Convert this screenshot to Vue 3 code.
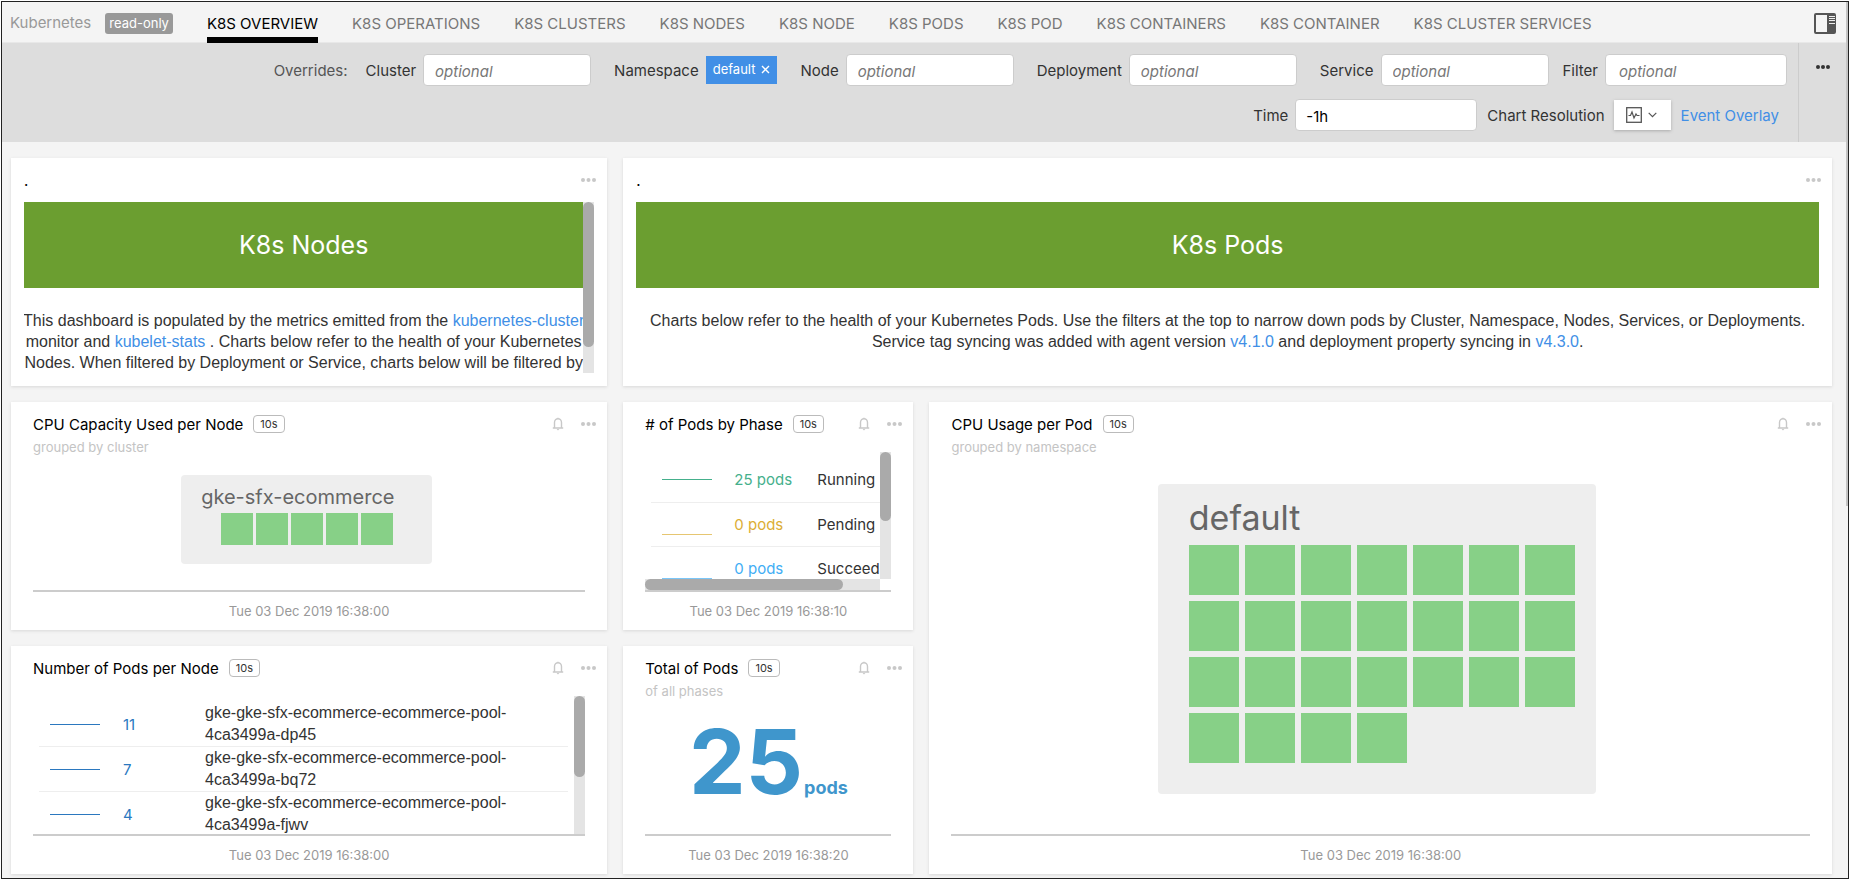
<script setup>
import { ref } from 'vue'

const tabs = [
  'K8S OVERVIEW',
  'K8S OPERATIONS',
  'K8S CLUSTERS',
  'K8S NODES',
  'K8S NODE',
  'K8S PODS',
  'K8S POD',
  'K8S CONTAINERS',
  'K8S CONTAINER',
  'K8S CLUSTER SERVICES',
]
const activeTab = ref('K8S OVERVIEW')
const time = ref('-1h')

const phases = [
  { value: '25 pods', label: 'Running', tone: 'green' },
  { value: '0 pods', label: 'Pending', tone: 'amber' },
  { value: '0 pods', label: 'Succeeded', tone: 'sky' },
]
const nodes = [
  { pods: 11, name: 'gke-gke-sfx-ecommerce-ecommerce-pool-4ca3499a-dp45' },
  { pods: 7, name: 'gke-gke-sfx-ecommerce-ecommerce-pool-4ca3499a-bq72' },
  { pods: 4, name: 'gke-gke-sfx-ecommerce-ecommerce-pool-4ca3499a-fjwv' },
]
</script>

<template>
  <div class="page">
    <header class="topbar">
      <span class="crumb">Kubernetes</span>
      <span class="readonly">read-only</span>
      <nav class="tabs">
        <a
          v-for="tab in tabs"
          :key="tab"
          href="#"
          :class="['tab', { active: tab === activeTab }]"
          @click.prevent="activeTab = tab"
        >{{ tab }}</a>
      </nav>
      <button class="icon-btn panel-btn" aria-label="Toggle side panel">
        <svg width="22" height="21" viewBox="0 0 22 21">
          <rect x="1" y="1" width="20" height="19" rx="1" fill="none" stroke="#555" stroke-width="2" />
          <rect x="13" y="1" width="8" height="19" fill="#555" />
          <path d="M15 3.5h6M15 5.5h6M15 7.5h6M15 10.5h6" stroke="#eee" stroke-width="1" />
        </svg>
      </button>
    </header>

    <section class="filters">
      <div class="filter-rows">
        <div class="filter-row">
          <span class="overrides">Overrides:</span>
          <div class="field"><label for="f-cluster">Cluster</label><input id="f-cluster" placeholder="optional"></div>
          <div class="field">
            <span>Namespace</span>
            <button class="chip">default
              <svg width="9" height="9" viewBox="0 0 9 9"><path d="M1 1l7 7M8 1l-7 7" stroke="#fff" stroke-width="1.4" /></svg>
            </button>
          </div>
          <div class="field"><label for="f-node">Node</label><input id="f-node" placeholder="optional"></div>
          <div class="field"><label for="f-deployment">Deployment</label><input id="f-deployment" placeholder="optional"></div>
          <div class="field"><label for="f-service">Service</label><input id="f-service" placeholder="optional"></div>
          <div class="field last"><label for="f-filter">Filter</label><input id="f-filter" class="wide" placeholder="optional"></div>
        </div>
        <div class="filter-row second">
          <div class="field"><label for="f-time">Time</label><input id="f-time" v-model="time" class="wide time"></div>
          <div class="field resolution">
            <label for="f-resolution">Chart Resolution</label>
            <button id="f-resolution" class="resolution-btn">
              <svg width="16" height="16" viewBox="0 0 16 16" fill="none" stroke="#555">
                <rect x="0.7" y="0.7" width="14.6" height="14.6" stroke-width="1.3" />
                <path d="M2.5 8.5h2l1.5-3.5 2 6 2-4 1 1.5h2.5" stroke-width="1.2" />
              </svg>
              <svg width="9" height="6" viewBox="0 0 9 6" fill="none" stroke="#555"><path d="M0.7 0.8l3.8 3.8 3.8-3.8" stroke-width="1.2" /></svg>
            </button>
          </div>
          <a href="#" class="overlay-link">Event Overlay</a>
        </div>
      </div>
      <div class="more-col">
        <button class="icon-btn dark" aria-label="More actions">
          <svg width="14" height="4" viewBox="0 0 14 4"><circle cx="2" cy="2" r="2" /><circle cx="7" cy="2" r="2" /><circle cx="12" cy="2" r="2" /></svg>
        </button>
      </div>
    </section>

    <main class="grid">
      <article class="card text-card span4">
        <div class="text-head">
          <span>.</span>
          <button class="icon-btn" aria-label="More"><svg width="15" height="4" viewBox="0 0 15 4"><circle cx="2" cy="2" r="2" /><circle cx="7.5" cy="2" r="2" /><circle cx="13" cy="2" r="2" /></svg></button>
        </div>
        <div class="scroller text-scroller">
          <div class="view">
            <h2 class="banner">K8s Nodes</h2>
            <p class="copy">
              This dashboard is populated by the metrics emitted from the <a href="#">kubernetes-cluster</a>
              monitor and <a href="#">kubelet-stats</a> . Charts below refer to the health of your Kubernetes
              Nodes. When filtered by Deployment or Service, charts below will be filtered by
            </p>
          </div>
          <div class="track"><div class="thumb tall"></div></div>
        </div>
      </article>

      <article class="card text-card span8">
        <div class="text-head">
          <span>.</span>
          <button class="icon-btn" aria-label="More"><svg width="15" height="4" viewBox="0 0 15 4"><circle cx="2" cy="2" r="2" /><circle cx="7.5" cy="2" r="2" /><circle cx="13" cy="2" r="2" /></svg></button>
        </div>
        <h2 class="banner">K8s Pods</h2>
        <p class="copy">
          Charts below refer to the health of your Kubernetes Pods. Use the filters at the top to narrow down pods by Cluster, Namespace, Nodes, Services, or Deployments.<br>
          Service tag syncing was added with agent version <a href="#">v4.1.0</a> and deployment property syncing in <a href="#">v4.3.0</a>.
        </p>
      </article>

      <article class="card chart span4">
        <div class="head">
          <h3>CPU Capacity Used per Node</h3><span class="res">10s</span>
          <button class="icon-btn bell" aria-label="Alerts"><svg width="12" height="14" viewBox="0 0 12 14"><path d="M6 0.8v1M2.5 10.6V5.4a3.5 3.6 0 0 1 7 0v5.2M0.8 11h10.4" /><path d="M4.6 12l1.4 1.4 1.4-1.4z" class="clapper" /></svg></button>
          <button class="icon-btn" aria-label="More"><svg width="15" height="4" viewBox="0 0 15 4"><circle cx="2" cy="2" r="2" /><circle cx="7.5" cy="2" r="2" /><circle cx="13" cy="2" r="2" /></svg></button>
        </div>
        <p class="sub">grouped by cluster</p>
        <div class="body heat-small">
          <div class="heat">
            <div class="heat-name">gke-sfx-ecommerce</div>
            <div class="tiles"><i v-for="n in 5" :key="n"></i></div>
          </div>
        </div>
        <footer>Tue 03 Dec 2019 16:38:00</footer>
      </article>

      <article class="card chart span2">
        <div class="head">
          <h3># of Pods by Phase</h3><span class="res">10s</span>
          <button class="icon-btn bell" aria-label="Alerts"><svg width="12" height="14" viewBox="0 0 12 14"><path d="M6 0.8v1M2.5 10.6V5.4a3.5 3.6 0 0 1 7 0v5.2M0.8 11h10.4" /><path d="M4.6 12l1.4 1.4 1.4-1.4z" class="clapper" /></svg></button>
          <button class="icon-btn" aria-label="More"><svg width="15" height="4" viewBox="0 0 15 4"><circle cx="2" cy="2" r="2" /><circle cx="7.5" cy="2" r="2" /><circle cx="13" cy="2" r="2" /></svg></button>
        </div>
        <div class="body no-sub">
          <div class="scroller phase-scroller">
            <div class="view">
              <table class="phases">
                <tbody>
                  <tr v-for="(p, i) in phases" :key="p.label" :class="p.tone">
                    <td class="spark-cell"><div :class="['spark', { low: i > 0 }]"></div></td>
                    <td class="value">{{ p.value }}</td>
                    <td class="label">{{ p.label }}</td>
                  </tr>
                </tbody>
              </table>
            </div>
            <div class="track"><div class="thumb phase"></div></div>
          </div>
          <div class="h-track"><div class="h-thumb"></div></div>
        </div>
        <footer>Tue 03 Dec 2019 16:38:10</footer>
      </article>

      <article class="card chart span6 tall-card">
        <div class="head">
          <h3>CPU Usage per Pod</h3><span class="res">10s</span>
          <button class="icon-btn bell" aria-label="Alerts"><svg width="12" height="14" viewBox="0 0 12 14"><path d="M6 0.8v1M2.5 10.6V5.4a3.5 3.6 0 0 1 7 0v5.2M0.8 11h10.4" /><path d="M4.6 12l1.4 1.4 1.4-1.4z" class="clapper" /></svg></button>
          <button class="icon-btn" aria-label="More"><svg width="15" height="4" viewBox="0 0 15 4"><circle cx="2" cy="2" r="2" /><circle cx="7.5" cy="2" r="2" /><circle cx="13" cy="2" r="2" /></svg></button>
        </div>
        <p class="sub">grouped by namespace</p>
        <div class="body heat-large">
          <div class="heat">
            <div class="heat-name">default</div>
            <div class="tiles"><i v-for="n in 25" :key="n"></i></div>
          </div>
        </div>
        <footer>Tue 03 Dec 2019 16:38:00</footer>
      </article>

      <article class="card chart span4">
        <div class="head">
          <h3>Number of Pods per Node</h3><span class="res">10s</span>
          <button class="icon-btn bell" aria-label="Alerts"><svg width="12" height="14" viewBox="0 0 12 14"><path d="M6 0.8v1M2.5 10.6V5.4a3.5 3.6 0 0 1 7 0v5.2M0.8 11h10.4" /><path d="M4.6 12l1.4 1.4 1.4-1.4z" class="clapper" /></svg></button>
          <button class="icon-btn" aria-label="More"><svg width="15" height="4" viewBox="0 0 15 4"><circle cx="2" cy="2" r="2" /><circle cx="7.5" cy="2" r="2" /><circle cx="13" cy="2" r="2" /></svg></button>
        </div>
        <div class="body no-sub">
          <div class="scroller node-scroller">
            <div class="view">
              <table class="nodes">
                <tbody>
                  <tr v-for="n in nodes" :key="n.name">
                    <td class="spark-cell"><div class="spark"></div></td>
                    <td class="value">{{ n.pods }}</td>
                    <td class="label"><div class="node-name">{{ n.name }}</div></td>
                  </tr>
                </tbody>
              </table>
            </div>
            <div class="track"><div class="thumb node"></div></div>
          </div>
        </div>
        <footer>Tue 03 Dec 2019 16:38:00</footer>
      </article>

      <article class="card chart span2">
        <div class="head">
          <h3>Total of Pods</h3><span class="res">10s</span>
          <button class="icon-btn bell" aria-label="Alerts"><svg width="12" height="14" viewBox="0 0 12 14"><path d="M6 0.8v1M2.5 10.6V5.4a3.5 3.6 0 0 1 7 0v5.2M0.8 11h10.4" /><path d="M4.6 12l1.4 1.4 1.4-1.4z" class="clapper" /></svg></button>
          <button class="icon-btn" aria-label="More"><svg width="15" height="4" viewBox="0 0 15 4"><circle cx="2" cy="2" r="2" /><circle cx="7.5" cy="2" r="2" /><circle cx="13" cy="2" r="2" /></svg></button>
        </div>
        <p class="sub">of all phases</p>
        <div class="body total"><span class="big">25</span><span class="unit">pods</span></div>
        <footer>Tue 03 Dec 2019 16:38:20</footer>
      </article>
    </main>
    <div class="page-thumb"></div>
  </div>
</template>

<style>
body { background: #fff; }
</style>

<style scoped>
.page {
  position: relative;
  box-sizing: border-box;
  min-height: calc(100vh - 2px);
  margin: 1px;
  border: 1px solid #222;
  background: #f4f4f4;
  color: #333;
  font: 15px/21px Inter, "Liberation Sans", sans-serif;
}
.page-thumb {
  position: absolute;
  top: 0;
  right: 0;
  width: 2px;
  height: 504px;
  background: #c4c4c4;
}
a { color: #418fe6; text-decoration: none; }
button, input { font: inherit; color: inherit; }
h2, h3, p { margin: 0; font-weight: 400; }
svg { display: block; }
.icon-btn {
  padding: 0;
  border: 0;
  background: none;
  fill: #c8c8c8;
  cursor: pointer;
}
.icon-btn.dark { fill: #333; }
.bell { fill: none; stroke: #c8c8c8; stroke-width: 1.4; }
.clapper { fill: #c8c8c8; stroke: none; }

.topbar {
  display: flex;
  align-items: center;
  height: 40px;
  padding: 0 12px 0 8px;
  border-bottom: 1px solid #e8e8e8;
}
.crumb { color: #999; }
.readonly {
  margin: 2px 34px 0 14px;
  padding: 0 4px;
  border-radius: 3px;
  background: #999;
  color: #fff;
  font-size: 13px;
}
.tabs { display: flex; flex: 1; gap: 34px; align-self: stretch; }
.tab {
  box-sizing: border-box;
  height: 41px;
  padding-top: 11px;
  color: #777;
  white-space: nowrap;
}
.tab.active { border-bottom: 6px solid #000; color: #000; }
.panel-btn { margin-top: 3px; }

.filters { display: flex; background: #ddd; }
.filter-rows { flex: 1; padding: 11px 11px 11px 0; }
.filter-row {
  display: flex;
  justify-content: flex-end;
  align-items: center;
  gap: 23px;
}
.filter-row.second { margin-top: 13px; gap: 10px; }
.overrides { margin-right: -5px; color: #555; }
.field { display: flex; align-items: center; gap: 7px; }
.field.last { margin-left: -9px; }
.field input {
  box-sizing: border-box;
  width: 168px;
  height: 32px;
  padding: 2px 11px 0;
  border: 1px solid #ccc;
  border-radius: 4px;
  background: #fff;
}
.field input.wide { width: 182px; padding-left: 13px; }
.field input.time { padding-left: 10px; color: #000; }
.field input::placeholder { color: #777; font-style: italic; opacity: 1; }
.chip {
  display: flex;
  align-items: center;
  gap: 6px;
  height: 28px;
  padding: 0 7px 2px;
  border: 0;
  background: #418fe6;
  color: #fff;
  font-size: 13px;
}
.resolution { gap: 9px; }
.resolution-btn {
  display: flex;
  align-items: center;
  gap: 6px;
  width: 57px;
  height: 30px;
  padding: 0 0 0 12px;
  border: 0;
  background: #fff;
  box-shadow: 0 1px 3px #aaa;
}
.overlay-link { margin-right: 8px; }
.more-col {
  box-sizing: border-box;
  width: 50px;
  padding: 22px 0 0 17px;
  border-left: 1px solid #ccc;
}
.more-col .icon-btn { display: block; }

.grid {
  display: grid;
  grid-template-columns: repeat(12, minmax(0, 1fr));
  grid-auto-rows: minmax(228px, auto);
  gap: 16px;
  padding: 16px 16px 4px 9px;
}
.span2 { grid-column: span 2; }
.span4 { grid-column: span 4; }
.span6 { grid-column: span 6; }
.span8 { grid-column: span 8; }
.tall-card { grid-row: span 2; }
.card {
  box-sizing: border-box;
  min-width: 0;
  background: #fff;
  box-shadow: 0 1px 3px #d8d8d8;
}

.text-card { padding: 0 13px 13px; }
.text-head {
  display: flex;
  justify-content: space-between;
  align-items: center;
  height: 44px;
  margin-right: -2px;
  color: #000;
}
.scroller { display: flex; overflow: hidden; }
.view { flex: 1; min-width: 0; overflow: hidden; }
.track { width: 11px; flex: none; background: #e4e4e4; }
.thumb { border-radius: 6px; background: #aaa; }
.text-scroller { height: 171px; }
.thumb.tall { height: 145px; }
.banner {
  margin-bottom: 22px;
  background: #6b9e30;
  color: #fff;
  font-size: 25px;
  line-height: 86px;
  text-align: center;
}
.copy {
  margin: 0 -2px;
  font-family: "Liberation Sans", Arial, sans-serif;
  font-size: 16px;
  text-align: center;
}

.chart { display: flex; flex-direction: column; padding: 12px 22px 0; }
.head { display: flex; align-items: center; height: 20px; margin-right: -11px; }
h3 { color: #000; font-size: 15px; white-space: nowrap; }
.res {
  box-sizing: border-box;
  height: 18px;
  margin: 0 auto 0 10px;
  padding: 0 6px;
  border: 1px solid #bbb;
  border-radius: 4px;
  font-size: 11px;
  line-height: 16px;
}
.bell { margin-right: 17px; }
.sub { margin-top: 3px; color: #c4c4c4; font-size: 13px; line-height: 20px; }
.body { flex: 1; }
.no-sub { margin-top: 18px; }
footer {
  height: 38px;
  border-top: 2px solid #ccc;
  color: #999;
  font-size: 13px;
  line-height: 38px;
  text-align: center;
}

.heat { box-sizing: border-box; border-radius: 4px; background: #eee; }
.heat-name { color: #666; white-space: nowrap; }
.tiles { display: grid; }
.tiles i { background: #87d087; }
.heat-small, .heat-large { display: flex; justify-content: center; align-items: flex-start; }
.heat-small { padding: 18px 5px 0 0; }
.heat-small .heat { width: 251px; padding: 6px 20px 19px; }
.heat-small .heat-name { font-size: 20px; line-height: 32px; }
.heat-small .tiles { grid-template-columns: repeat(5, 32px); grid-auto-rows: 32px; justify-content: center; gap: 3px; }
.heat-large { padding: 27px 8px 0 0; }
.heat-large .heat { width: 438px; padding: 14px 20px 31px 31px; }
.heat-large .heat-name { font-size: 34px; line-height: 40px; margin-bottom: 7px; }
.heat-large .tiles { grid-template-columns: repeat(7, 50px); grid-auto-rows: 50px; gap: 6px; }

table { border-collapse: collapse; }
td { padding: 0; text-align: left; }
.value { font-size: 15px; white-space: nowrap; }
.spark { width: 50px; height: 1px; margin-left: 11px; background: currentColor; }
.phase-scroller { height: 127px; }
.phases { width: 300px; margin: 6px 0 0 6px; }
.phases tr { height: 44px; border-bottom: 1px solid #eee; }
.phases .spark-cell { width: 83px; height: 43px; }
.phases .value { width: 83px; }
.phases .label { color: #333; }
.spark.low { margin-top: 20px; opacity: 0.7; }
.green { color: #45b08c; }
.amber { color: #dcae35; }
.sky { color: #42aef5; }
.thumb.phase { height: 69px; }
.h-track { height: 11px; margin-right: 11px; background: #e4e4e4; }
.h-thumb { width: 84%; height: 11px; border-radius: 6px; background: #aaa; }

.node-scroller { height: 138px; }
.node-scroller .view { padding: 6px 6px 0; box-sizing: border-box; }
.nodes { width: 100%; }
.nodes tr { border-bottom: 1px solid #eee; color: #2b78bf; }
.nodes .spark-cell { width: 84px; }
.nodes .value { width: 82px; }
.nodes .label { color: #333; line-height: 22px; }
.node-name {
  max-width: 330px;
  font-family: "Liberation Sans", Arial, sans-serif;
  font-size: 16px;
}
.thumb.node { height: 81px; }

.total { display: flex; justify-content: center; align-items: baseline; gap: 1px; color: #3f96cc; font-weight: 700; }
.big { font-size: 90px; line-height: 122px; }
.unit { font-size: 18px; }
</style>
